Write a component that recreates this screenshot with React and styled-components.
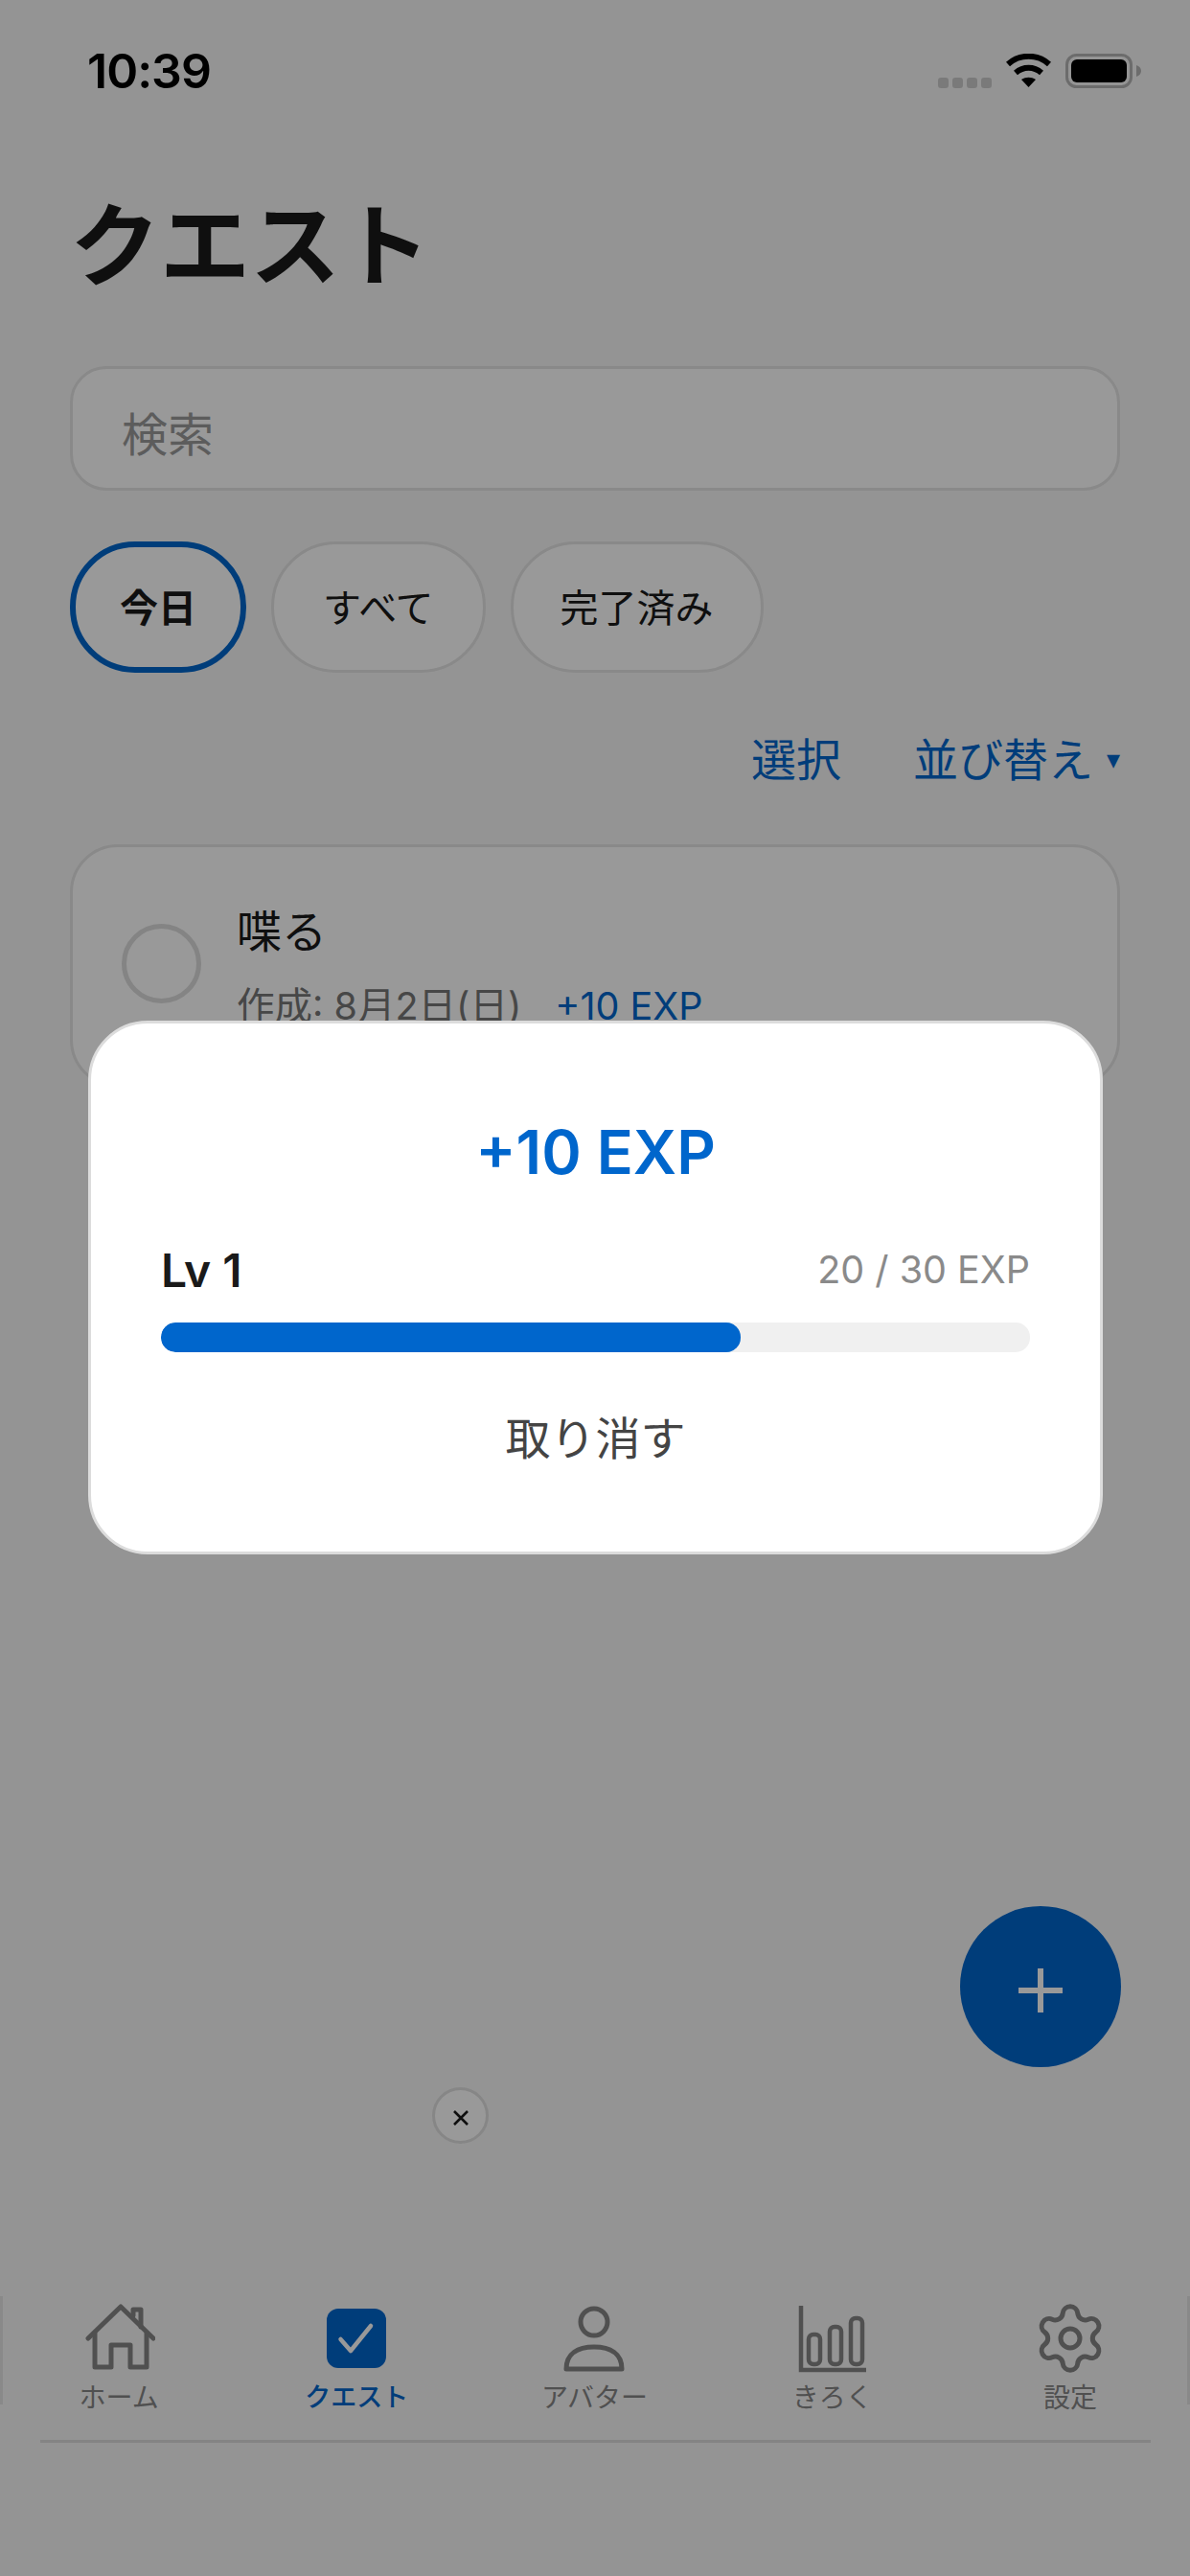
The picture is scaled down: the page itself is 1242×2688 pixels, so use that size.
import React from "react";
import styled, { createGlobalStyle } from "styled-components";
import { Settings } from "lucide-react";

const Global = createGlobalStyle`
  html, body { margin: 0; padding: 0; background: #f7f7f7; }
  * { box-sizing: border-box; }
`;

const JP = `Inter, "Noto Sans CJK JP", sans-serif`;

const Screen = styled.div`
  position: relative;
  width: 1242px;
  height: 2688px;
  overflow: hidden;
  background: #f7f7f7;
  font-family: ${JP};
  color: #1a1a1a;
  display: flex;
  flex-direction: column;
`;
const StatusBar = styled.div`
  height: 148px;
  padding: 0 51px 0 91px;
  display: flex;
  align-items: center;
  justify-content: space-between;
`;
const Clock = styled.span`
  font-family: Inter, sans-serif;
  font-size: 50px;
  font-weight: 600;
  letter-spacing: -1px;
  color: #000;
`;
const StatusIcons = styled.div`
  display: flex;
  align-items: flex-end;
  gap: 15px;
`;
const Signal = styled.div`
  display: flex;
  gap: 4px;
`;
const Dot = styled.i`
  display: block;
  width: 11px;
  height: 11px;
  border-radius: 3px;
  background: #ccc;
`;
const Content = styled.main`
  padding: 0 73px;
  display: flex;
  flex-direction: column;
`;
const Title = styled.h1`
  margin: 49px 0 0;
  height: 120px;
  line-height: 120px;
  font-size: 94px;
  font-weight: 700;
  color: #1a1a1a;
`;
const Search = styled.div`
  margin-top: 65px;
  height: 130px;
  border: 3px solid #e4e4e4;
  border-radius: 38px;
  background: #fff;
  padding: 5px 51px 0;
  display: flex;
  align-items: center;
  font-size: 48px;
  color: #999;
`;
const Chips = styled.div`
  margin-top: 53px;
  display: flex;
  gap: 26px;
`;
const Chip = styled.div`
  height: 137px;
  padding: 0 ${(p) => p.$pad}px 4px;
  border: ${(p) => (p.$active ? "6px solid #0066cc" : "3px solid #e4e4e4")};
  border-radius: 68px;
  background: #fff;
  display: flex;
  align-items: center;
  font-size: 40px;
  font-weight: ${(p) => (p.$active ? 700 : 400)};
  color: #1a1a1a;
`;
const Actions = styled.div`
  margin-top: 57px;
  height: 60px;
  display: flex;
  justify-content: flex-end;
  align-items: center;
  gap: 75px;
  font-size: 47px;
  color: #0066cc;
`;
const SortAction = styled.span`
  display: flex;
  align-items: center;
  gap: 14px;
`;
const Caret = styled.span`
  font-size: 28px;
  line-height: 1;
  margin-top: 6px;
`;
const Card = styled.section`
  margin-top: 62px;
  height: 254px;
  border: 3px solid #e4e4e4;
  border-radius: 50px;
  background: #fff;
  padding: 0 50px;
  display: flex;
  align-items: flex-start;
  gap: 37px;
`;
const Radio = styled.div`
  margin-top: 80px;
  margin-left: 1px;
  width: 83px;
  height: 83px;
  border: 5px solid #dcdcdc;
  border-radius: 50%;
  flex: none;
`;
const CardText = styled.div`
  padding-top: 57px;
  display: flex;
  flex-direction: column;
  gap: 22px;
`;
const CardTitle = styled.div`
  font-size: 47px;
  line-height: 62px;
  color: #1a1a1a;
`;
const Meta = styled.div`
  display: flex;
  gap: 35px;
  font-size: 39.5px;
  line-height: 50px;
  color: #777;
`;
const MetaExp = styled.span`
  color: #0066cc;
`;
const Fab = styled.div`
  position: absolute;
  left: 1002px;
  top: 1989px;
  width: 168px;
  height: 168px;
  border-radius: 50%;
  background: #0066cc;
  display: flex;
  align-items: center;
  justify-content: center;
  padding-top: 8px;
`;
const DismissAd = styled.div`
  position: absolute;
  left: 451px;
  top: 2178px;
  width: 59px;
  height: 59px;
  border-radius: 50%;
  border: 3px solid #e0e0e0;
  background: #fff;
  display: flex;
  align-items: center;
  justify-content: center;
  padding-top: 5px;
`;
const Nav = styled.nav`
  margin-top: auto;
  margin-bottom: 139px;
  position: relative;
  height: 153px;
  padding-right: 1px;
  display: grid;
  grid-template-columns: repeat(5, 1fr);
  &::before, &::after {
    content: "";
    position: absolute;
    top: 0;
    height: 113px;
    width: 3px;
    background: #e4e4e4;
  }
  &::before { left: 0; }
  &::after { right: 0; }
`;
const NavDivider = styled.div`
  position: absolute;
  left: 42px;
  right: 41px;
  bottom: 0;
  height: 3px;
  background: #dcdcdc;
`;
const NavItem = styled.div`
  display: flex;
  flex-direction: column;
  align-items: center;
  color: ${(p) => (p.$active ? "#0066cc" : "#858585")};
  font-size: ${(p) => (p.$active ? 27 : 28)}px;
  font-weight: ${(p) => (p.$active ? 500 : 400)};
`;
const NavIcon = styled.div`
  height: 88px;
  padding-top: 10px;
  display: flex;
  justify-content: center;
`;
const NavLabel = styled.span`
  line-height: 36px;
  height: 36px;
`;
const Scrim = styled.div`
  position: absolute;
  inset: 0;
  background: rgba(0, 0, 0, 0.4);
`;
const Toast = styled.div`
  position: absolute;
  left: 92px;
  top: 1065px;
  width: 1059px;
  height: 557px;
  background: #fff;
  border: 3px solid #dcdcdc;
  border-radius: 62px;
  padding: 99px 73px 0;
  display: flex;
  flex-direction: column;
`;
const Gain = styled.div`
  height: 70px;
  line-height: 70px;
  text-align: center;
  font-family: Inter, sans-serif;
  font-size: 63px;
  font-weight: 600;
  color: #0066cc;
`;
const LevelRow = styled.div`
  margin-top: 58px;
  height: 60px;
  display: flex;
  align-items: center;
  justify-content: space-between;
  font-family: Inter, sans-serif;
`;
const Level = styled.span`
  font-size: 48px;
  font-weight: 600;
  color: #1a1a1a;
`;
const Points = styled.span`
  font-size: 39.5px;
  color: #8a8a8a;
`;
const Track = styled.div`
  margin-top: 25px;
  height: 31px;
  border-radius: 15px;
  background: #f0f0f0;
  overflow: hidden;
`;
const Fill = styled.div`
  height: 100%;
  border-radius: 15px;
  background: #0066cc;
`;
const Undo = styled.div`
  margin-top: 60px;
  height: 60px;
  line-height: 60px;
  text-align: center;
  font-size: 47px;
  color: #444;
`;
const QuestSvg = styled.svg`
  margin-top: 3px;
`;
const HomeSvg = styled.svg`
  margin-top: -2px;
`;
const Gear = styled(Settings)`
  margin-top: -6px;
`;

const HomeIcon = () => (
  <HomeSvg width="76" height="70" viewBox="-2 0 76 70" fill="none" stroke="currentColor" strokeWidth="5" strokeLinejoin="round" strokeLinecap="round">
    <path d="M4 36 L38 3 L72 36" />
    <path d="M51 12 V6 H59 V24" />
    <path d="M11 31 V66 H28 V43 H48 V66 H65 V31" />
  </HomeSvg>
);
const QuestIcon = () => (
  <QuestSvg width="62" height="62" viewBox="0 0 62 62">
    <rect width="62" height="62" rx="12" fill="currentColor" />
    <path d="M14.5 32 L25 44 L46 18" fill="none" stroke="#fff" strokeWidth="4.5" strokeLinecap="round" strokeLinejoin="round" />
  </QuestSvg>
);
const PersonIcon = () => (
  <svg width="68" height="70" viewBox="0 0 68 70" fill="none" stroke="currentColor" strokeWidth="5" strokeLinejoin="round">
    <circle cx="34" cy="17" r="14" />
    <path d="M5 66 C5 50 17 43 34 43 C51 43 63 50 63 66 Z" />
  </svg>
);
const ChartIcon = () => (
  <svg width="72" height="70" viewBox="0 0 72 70" fill="none" stroke="currentColor" strokeWidth="4.5">
    <path d="M3 0 V67 H71" />
    <rect x="11" y="30" width="12" height="31" rx="5" />
    <rect x="33" y="22" width="12" height="39" rx="5" />
    <rect x="55" y="13" width="12" height="48" rx="5" />
  </svg>
);
const Wifi = () => (
  <svg width="47" height="36" viewBox="0 0 47 36" fill="none" stroke="#000" strokeWidth="6">
    <path d="M2 11 C14 0 33 0 45 11" />
    <path d="M10 20 C18 13 29 13 37 20" />
    <path d="M16 27 L23.5 35 L31 27 C26 24 21 24 16 27 Z" fill="#000" stroke="none" />
  </svg>
);
const Battery = () => (
  <svg width="79" height="36" viewBox="0 0 79 36">
    <rect x="1.5" y="1.5" width="67" height="33" rx="10" fill="none" stroke="#b4b4b4" strokeWidth="3" />
    <rect x="6" y="6" width="58" height="24" rx="6" fill="#000" />
    <path d="M74 12 C77 13 79 15 79 18 C79 21 77 23 74 24 Z" fill="#b4b4b4" />
  </svg>
);
const Plus = () => (
  <svg width="48" height="48" viewBox="0 0 48 48" stroke="#fff" strokeWidth="6">
    <path d="M24 1 V47 M1 24 H47" />
  </svg>
);
const Cross = () => (
  <svg width="20" height="20" viewBox="0 0 20 20" stroke="#1a1a1a" strokeWidth="2.6">
    <path d="M3 3 L17 17 M17 3 L3 17" />
  </svg>
);

const navItems = [
  { label: "ホーム", icon: <HomeIcon /> },
  { label: "クエスト", icon: <QuestIcon />, active: true },
  { label: "アバター", icon: <PersonIcon /> },
  { label: "きろく", icon: <ChartIcon /> },
  { label: "設定", icon: <Gear size={80} strokeWidth={1.5} /> },
];

export default function App() {
  return (
    <Screen>
      <Global />
      <StatusBar>
        <Clock>10:39</Clock>
        <StatusIcons>
          <Signal>
            <Dot /><Dot /><Dot /><Dot />
          </Signal>
          <Wifi />
          <Battery />
        </StatusIcons>
      </StatusBar>
      <Content>
        <Title>クエスト</Title>
        <Search>検索</Search>
        <Chips>
          <Chip $active $pad={46}>今日</Chip>
          <Chip $pad={51}>すべて</Chip>
          <Chip $pad={49}>完了済み</Chip>
        </Chips>
        <Actions>
          <span>選択</span>
          <SortAction>並び替え<Caret>▾</Caret></SortAction>
        </Actions>
        <Card>
          <Radio />
          <CardText>
            <CardTitle>喋る</CardTitle>
            <Meta>
              <span>作成: 8月2日(日)</span>
              <MetaExp>+10 EXP</MetaExp>
            </Meta>
          </CardText>
        </Card>
      </Content>
      <Fab><Plus /></Fab>
      <DismissAd><Cross /></DismissAd>
      <Nav>
        {navItems.map((item) => (
          <NavItem key={item.label} $active={item.active}>
            <NavIcon>{item.icon}</NavIcon>
            <NavLabel>{item.label}</NavLabel>
          </NavItem>
        ))}
        <NavDivider />
      </Nav>
      <Scrim />
      <Toast>
        <Gain>+10 EXP</Gain>
        <LevelRow>
          <Level>Lv 1</Level>
          <Points>20 / 30 EXP</Points>
        </LevelRow>
        <Track>
          <Fill style={{ width: `${(20 / 30) * 100}%` }} />
        </Track>
        <Undo>取り消す</Undo>
      </Toast>
    </Screen>
  );
}
